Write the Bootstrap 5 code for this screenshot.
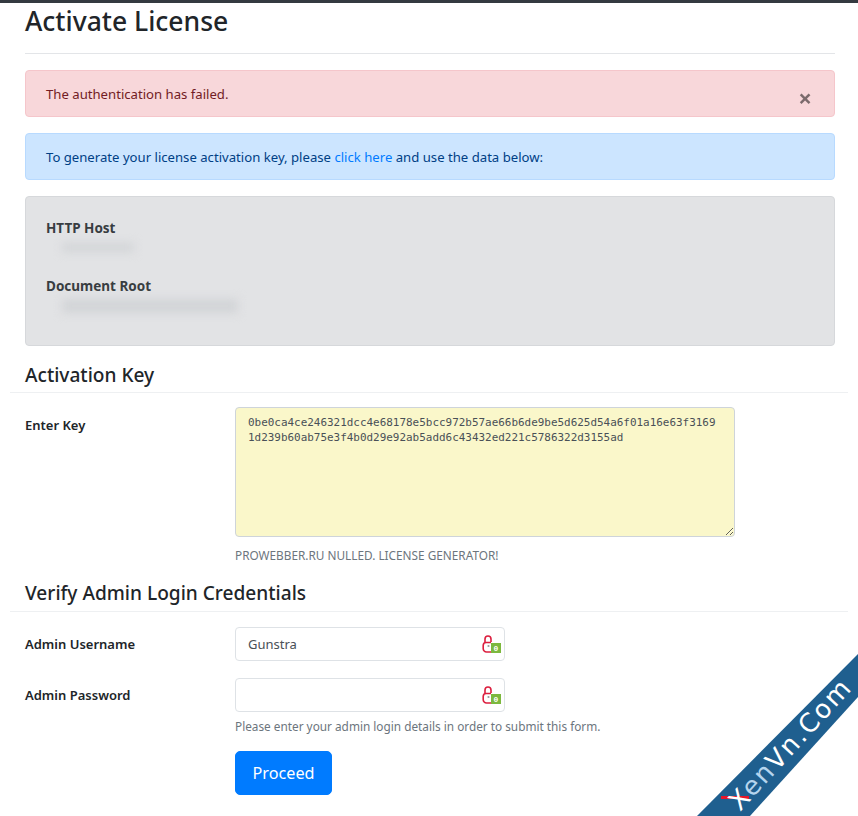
<!DOCTYPE html>
<html lang="en">
  <head>
    <meta charset="UTF-8" />
    <title>Activate License</title>
    <meta name="viewport" content="width=device-width, initial-scale=1.0" />
    <link href="https://cdn.jsdelivr.net/npm/bootstrap@5.3.3/dist/css/bootstrap.min.css" rel="stylesheet" />
    <style>
      html, body { height: 100%; }
      body {
        font-family: "Noto Sans", "Open Sans", sans-serif;
        font-size: 13px;
        color: #212529;
        border-top: 3px solid #343a40;
        overflow: hidden;
        position: relative;
      }
      .page-wrap { padding: 0 23px 0 25px; }
      .page-title { font-size: 26.5px; font-weight: 500; line-height: 34px; margin: 1px 0 16px; padding-bottom: 15px; border-bottom: 1px solid #e3e5e8; }
      .msg-box { font-size: 13.15px; height: 47px; padding: 14px 20px; line-height: 18px; border-radius: 4px; margin-bottom: 16px; }
      .msg-danger { background: #f8d7da; border: 1px solid #f5c6cb; color: #721c24; }
      .msg-info { background: #cce5ff; border: 1px solid #b8daff; color: #004085; }
      .msg-info a { color: #007bff; text-decoration: none; }
      .dismiss-x { position: absolute; right: 22px; top: 14px; border: 0; background: none; padding: 0; font-size: 24px; line-height: 26px; font-weight: 700; color: #000; opacity: .5; }
      .server-box { height: 150px; background: #e2e3e5; border: 1px solid #d6d8db; color: #383d41; border-radius: 4px; padding: 21px 20px; margin-bottom: 15px; }
      .server-box dt { font-size: 13.5px; font-weight: 700; line-height: 20px; }
      .server-box dd { height: 38px; margin: 0; display: flow-root; }
      .blur-val { display: block; background: #d2d4d7; filter: blur(5px); }
      .blur-host { width: 72px; height: 9px; margin: 5px 0 0 16px; }
      .blur-root { width: 176px; height: 14px; margin: 3px 0 0 16px; }
      .sec-head { font-size: 19.1px; font-weight: 500; line-height: 28px; margin: 0 -13px 14px -15px; padding: 0 15px 3px; border-bottom: 1px solid #eef0f2; }
      .sec-head-verify { margin-top: 15px; padding-bottom: 4px; margin-bottom: 15px; }
      .form-row-x { --bs-gutter-x: 30px; }
      .form-row-x label { font-size: 13px; font-weight: 600; }
      .enter-label { padding-top: 9px; }
      .user-label { padding-top: 2px; }
      .pass-label { padding-top: 8px; }
      .user-row { margin-bottom: 17px; }
      .key-area { width: 500px; height: 130px; background: #faf7ca; border-color: #ced4da; border-radius: 4px; font-family: "DejaVu Sans Mono", monospace; font-size: 10.95px; line-height: 15px; color: #495057; padding: 7px 12px; }
      .help-note { font-size: 11.8px; color: #6c757d; line-height: 18px; }
      .key-note { margin-top: 9px; }
      .pass-note { margin-top: 5px; }
      .cred-input { width: 270px; height: 34px; font-size: 13px; color: #495057; padding: 6px 12px; border-radius: 4px; }
      .cred-wrap { width: 270px; }
      .lock-mark { position: absolute; right: 3px; top: 8px; }
      .proceed-btn { background: #007bff; border-color: #007bff; font-size: 16.2px; height: 44px; width: 97px; border-radius: 5px; margin-top: 16px; }
      .stamp { position: absolute; right: 0; bottom: 0; }
    </style>
  </head>
  <body>
    <div class="page-wrap">
      <h1 class="page-title">Activate License</h1>

      <div class="msg-box msg-danger position-relative">
        The authentication has failed.
        <button type="button" class="dismiss-x" aria-label="Close">×</button>
      </div>
      <div class="msg-box msg-info">
        To generate your license activation key, please <a href="#">click here</a> and use the data below:
      </div>

      <dl class="server-box">
        <dt>HTTP Host</dt>
        <dd><span class="blur-val blur-host"></span></dd>
        <dt>Document Root</dt>
        <dd><span class="blur-val blur-root"></span></dd>
      </dl>

      <h2 class="sec-head">Activation Key</h2>
      <div class="row form-row-x">
        <div class="col-3"><label class="enter-label">Enter Key</label></div>
        <div class="col-9">
          <textarea class="form-control key-area" spellcheck="false">0be0ca4ce246321dcc4e68178e5bcc972b57ae66b6de9be5d625d54a6f01a16e63f31691d239b60ab75e3f4b0d29e92ab5add6c43432ed221c5786322d3155ad</textarea>
          <div class="help-note key-note">PROWEBBER.RU NULLED. LICENSE GENERATOR!</div>
        </div>
      </div>

      <h2 class="sec-head sec-head-verify">Verify Admin Login Credentials</h2>
      <div class="row form-row-x align-items-center user-row">
        <div class="col-3"><label class="user-label">Admin Username</label></div>
        <div class="col-9">
          <div class="cred-wrap position-relative">
            <input type="text" class="form-control cred-input" value="Gunstra" />
            <svg class="lock-mark" width="20" height="18" viewBox="0 0 20 18" fill="none">
              <path d="M3 7V4a3 3 0 0 1 6 0v3" stroke="#dc1f3f" stroke-width="1.6" />
              <path d="M9 7.5H4A3 3 0 0 0 1.2 10.5v3A3.4 3.4 0 0 0 4.6 17H9" stroke="#dc1f3f" stroke-width="1.6" />
              <circle cx="6.5" cy="11" r="1.1" fill="#9a9a9a" />
              <rect x="9" y="8" width="10" height="10" fill="#7cb83e" />
              <text x="14" y="16" text-anchor="middle" font-family="Liberation Mono, monospace" font-size="8" font-weight="700" fill="#fff">0</text>
            </svg>
          </div>
        </div>
      </div>
      <div class="row form-row-x">
        <div class="col-3"><label class="pass-label">Admin Password</label></div>
        <div class="col-9">
          <div class="cred-wrap position-relative">
            <input type="password" class="form-control cred-input" />
            <svg class="lock-mark" width="20" height="18" viewBox="0 0 20 18" fill="none">
              <path d="M3 7V4a3 3 0 0 1 6 0v3" stroke="#dc1f3f" stroke-width="1.6" />
              <path d="M9 7.5H4A3 3 0 0 0 1.2 10.5v3A3.4 3.4 0 0 0 4.6 17H9" stroke="#dc1f3f" stroke-width="1.6" />
              <circle cx="6.5" cy="11" r="1.1" fill="#9a9a9a" />
              <rect x="9" y="8" width="10" height="10" fill="#7cb83e" />
              <text x="14" y="16" text-anchor="middle" font-family="Liberation Mono, monospace" font-size="8" font-weight="700" fill="#fff">0</text>
            </svg>
          </div>
          <div class="help-note pass-note">Please enter your admin login details in order to submit this form.</div>
          <button type="button" class="btn btn-primary proceed-btn">Proceed</button>
        </div>
      </div>
    </div>

    <svg class="stamp" width="178" height="176" viewBox="680 640 178 176">
      <polygon points="858,654 858,697 750,816 697,816" fill="#1f5f8f" />
      <rect x="721" y="796" width="28" height="3" fill="#e5172b" />
      <text transform="translate(740 812) rotate(-47.5)" font-family="DejaVu Sans, sans-serif" font-size="26" textLength="166" fill="#fff">X<tspan fill="#b5d5ee">en</tspan>Vn.Com</text>
    </svg>
  </body>
</html>
